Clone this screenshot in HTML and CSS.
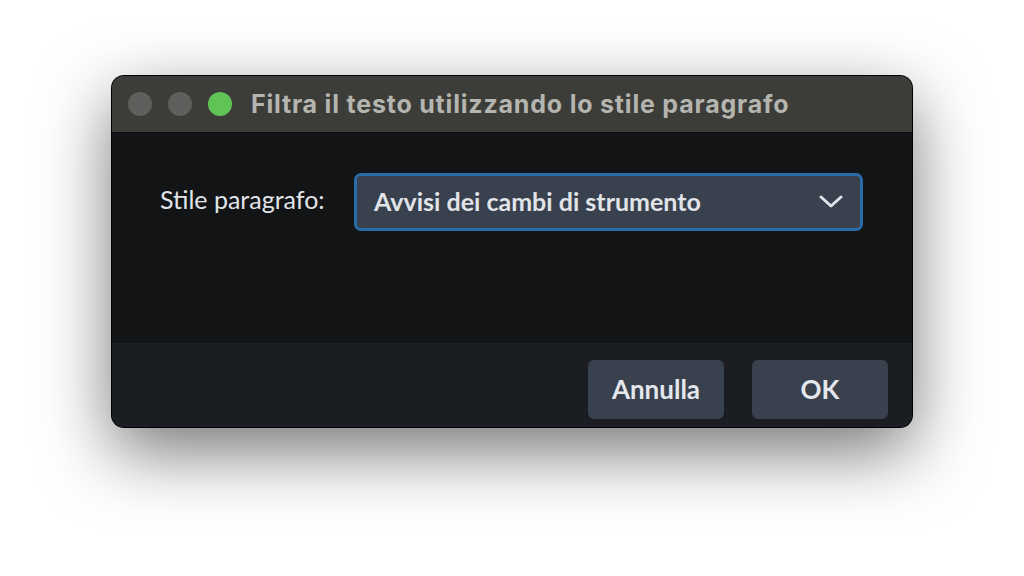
FILE: index.html
```html
<!DOCTYPE html>
<html lang="it">
<head>
<meta charset="utf-8">
<title>Filtra il testo utilizzando lo stile paragrafo</title>
<link rel="stylesheet" href="styles.css">
</head>
<body>
<div class="window">
  <div class="titlebar">
    <div class="lights">
      <span class="light gray"></span>
      <span class="light gray"></span>
      <span class="light green"></span>
    </div>
    <div class="title">Filtra il testo utilizzando lo stile paragrafo</div>
  </div>
  <div class="content">
    <div class="row">
      <label class="label">Stile paragrafo:</label>
      <div class="select">
        <span class="select-text">Avvisi dei cambi di strumento</span>
        <svg class="chevron" width="24" height="14" viewBox="0 0 24 14"><path d="M2 2 L12 11 L22 2" fill="none" stroke="#dfe3e8" stroke-width="3" stroke-linecap="round" stroke-linejoin="round"/></svg>
      </div>
    </div>
  </div>
  <div class="footer">
    <button class="btn">Annulla</button>
    <button class="btn">OK</button>
  </div>
</div>
</body>
</html>
```
FILE: styles.css
```css
html, body {
  margin: 0;
  padding: 0;
  background: #ffffff;
}
body {
  width: 1024px;
  height: 576px;
  overflow: hidden;
  display: flex;
  flex-direction: column;
  align-items: center;
  padding-top: 76px;
  box-sizing: border-box;
}
.window {
  width: 800px;
  height: 351px;
  border-radius: 12px;
  overflow: hidden;
  display: flex;
  flex-direction: column;
  background: #131416;
  box-shadow: 0 0 0 1px #000, inset 0 0 0 1px rgba(255,255,255,0.12), 0 24px 70px rgba(0,0,0,0.55);
  box-sizing: border-box;
}
.titlebar {
  height: 57px;
  flex: 0 0 57px;
  background: #3c3c39;
  border-bottom: 1px solid #0e0e0e;
  box-sizing: border-box;
  display: flex;
  align-items: center;
  padding-left: 16px;
}
.lights {
  display: flex;
  gap: 16px;
}
.light {
  width: 24px;
  height: 24px;
  border-radius: 50%;
  display: block;
}
.light.gray { background: #5f605d; }
.light.green { background: #5fc454; }
.title {
  margin-left: 19px;
  font-family: Inter, "Liberation Sans", sans-serif;
  font-weight: 700;
  font-size: 25px;
  color: #b5b5b0;
  letter-spacing: 0.8px;
  padding-bottom: 1px;
}
.content {
  height: 210px;
  flex: 0 0 210px;
  background: #131416;
  padding: 40px 49px 0 48px;
  box-sizing: border-box;
}
.row {
  display: flex;
  align-items: center;
}
.label {
  flex: 0 0 194px;
  font-family: Lato, "Open Sans", sans-serif;
  font-size: 25px;
  color: #e1e4e8;
  padding-bottom: 6px;
}
.select {
  flex: 1;
  height: 58px;
  border: 3px solid #2a6aa6;
  border-radius: 7px;
  background: #38414d;
  box-sizing: border-box;
  display: flex;
  align-items: center;
  padding: 0 17px 0 17px;
}
.select-text {
  flex: 1;
  font-family: Lato, "Open Sans", sans-serif;
  font-weight: 700;
  font-size: 25px;
  color: #e1e4e8;
  padding-bottom: 2px;
}
.chevron {
  display: block;
}
.footer {
  flex: 1;
  background: #1a1d21;
  display: flex;
  justify-content: flex-end;
  gap: 28px;
  padding: 17px 24px 0 0;
  box-sizing: border-box;
}
.btn {
  width: 136px;
  height: 59px;
  border: none;
  border-radius: 6px;
  background: #38414d;
  color: #e4e7eb;
  font-family: Lato, "Open Sans", sans-serif;
  font-weight: 700;
  font-size: 26px;
  padding: 0 0 2px 0;
}
```
